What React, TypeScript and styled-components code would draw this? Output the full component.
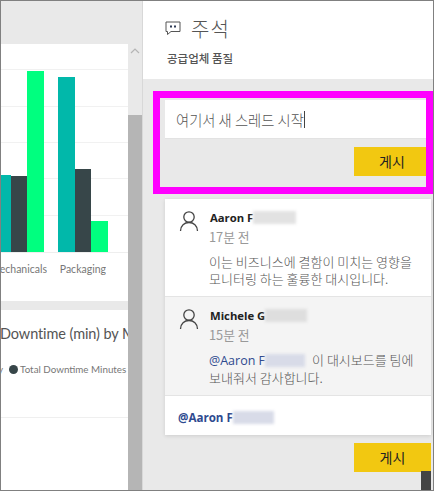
import React from "react";
import styled, { createGlobalStyle } from "styled-components";

const Global = createGlobalStyle`
  html, body { margin: 0; padding: 0; background: #fff; }
  * { box-sizing: border-box; }
  body { font-family: "Open Sans", "Noto Sans CJK KR", sans-serif; }
`;

const Frame = styled.div`
  width: 434px;
  height: 491px;
  border: 1px solid #808080;
  display: flex;
  overflow: hidden;
  background: #e9e9e9;
`;

const Dashboard = styled.div`
  width: 127px;
  flex: none;
  padding-top: 43px;
  display: flex;
  flex-direction: column;
  gap: 9px;
  overflow: hidden;
`;

const ChartCard = styled.div`
  height: 257px;
  background: #fff;
  display: flex;
  flex-direction: column;
`;

const AxisLabels = styled.div`
  display: flex;
  font: 400 10.5px Lato, sans-serif;
  color: #777;
  height: 20px;
  margin-top: 10px;
  white-space: nowrap;
`;

const AxisLabel = styled.span<{ $w: number; $ml: number }>`
  width: ${(p) => p.$w}px;
  margin-left: ${(p) => p.$ml}px;
  flex: none;
  display: flex;
  justify-content: flex-end;
  overflow: hidden;
`;

const DowntimeCard = styled.div`
  flex: 1;
  background: #fff;
  padding-top: 13px;
  white-space: nowrap;
`;

const CardTitle = styled.div`
  font: 400 14.5px/22px Lato, sans-serif;
  letter-spacing: -0.1px;
  color: #555;
  margin-left: -1px;
  overflow: hidden;
`;

const Legend = styled.div`
  display: flex;
  align-items: center;
  margin-top: 16px;
  height: 16px;
  font: 400 9.8px Lato, sans-serif;
  color: #777;
`;

const LegendClip = styled.span`
  margin-left: -3px;
`;

const LegendDot = styled.span`
  width: 9px;
  height: 9px;
  flex: none;
  border-radius: 50%;
  background: #374649;
  margin: 0 2px 0 6px;
`;

const CardRule = styled.div`
  height: 1px;
  background: #efefef;
  margin-top: 40px;
`;

const Scrollbar = styled.div`
  width: 14px;
  flex: none;
  background: #e9e9e9;
  display: flex;
  flex-direction: column;
`;

const ScrollTrack = styled.div`
  height: 114px;
  padding: 47px 0 0 2px;
`;

const ScrollThumb = styled.div`
  flex: 1;
  background: #b5b5b5;
`;

const Panel = styled.div`
  flex: 1;
  min-width: 0;
  border-left: 1px solid #d8d8d8;
  display: flex;
  flex-direction: column;
  background: #e9e9e9;
`;

const PanelHeader = styled.div`
  height: 78px;
  background: #fff;
  padding: 12px 0 0 22px;
  flex: none;
`;

const TitleRow = styled.div`
  display: flex;
  align-items: center;
  gap: 10px;
  height: 30px;
`;

const Title = styled.h1`
  margin: 0;
  font-size: 20px;
  font-weight: 300;
  color: #555;
  letter-spacing: 1px;
  font-family: "Noto Sans CJK KR", sans-serif;
`;

const Subtitle = styled.div`
  font-size: 11.5px;
  line-height: 16px;
  font-weight: 500;
  color: #555;
  margin: 7px 0 0 2px;
  font-family: "Noto Sans CJK KR", sans-serif;
`;

const Highlight = styled.section`
  margin: 12px 0 0 10px;
  height: 103px;
  border: 7px solid #ff00ff;
  padding: 2px 0 0 5px;
  flex: none;
`;

const NewThread = styled.div`
  height: 39px;
  background: #fff;
  border-bottom: 1px solid #e2e2e2;
  padding-left: 11px;
  display: flex;
  align-items: center;
  font-size: 14.3px;
  color: #555;
  font-weight: 300;
  font-family: "Noto Sans CJK KR", sans-serif;
`;

const Caret = styled.span`
  width: 1px;
  height: 17px;
  background: #444;
`;

const ButtonRow = styled.div`
  display: flex;
  justify-content: flex-end;
  margin-top: 8px;
`;

const PostButton = styled.button<{ $w: number; $pl?: number }>`
  width: ${(p) => p.$w}px;
  height: 29px;
  border: none;
  padding: 0 0 1px ${(p) => p.$pl ?? 0}px;
  background: #f2c811;
  color: #222;
  font-size: 14px;
  font-family: "Noto Sans CJK KR", sans-serif;
`;

const Thread = styled.div`
  margin: 5px 2px 0 22px;
  background: #fff;
  box-shadow: 0 1px 4px rgba(0, 0, 0, 0.12);
  flex: none;
`;

const Comment = styled.article<{ $alt?: boolean; $h: number }>`
  height: ${(p) => p.$h}px;
  background: ${(p) => (p.$alt ? "#f4f4f4" : "#fff")};
  border-bottom: 1px solid #e4e4e4;
  padding: 11px 0 0 14px;
  display: flex;
  gap: 8px;
`;

const Avatar = styled.svg`
  width: 22px;
  height: 22px;
  flex: none;
`;

const CommentBody = styled.div`
  min-width: 0;
  font-family: "Noto Sans CJK KR", "Open Sans", sans-serif;
`;

const Author = styled.div`
  display: flex;
  align-items: center;
  height: 15px;
  margin-left: 1px;
  font: 700 11.3px "Open Sans", sans-serif;
  color: #222;
`;

const Blur = styled.span<{ $w: number; $c: string }>`
  display: inline-block;
  width: ${(p) => p.$w}px;
  height: 13px;
  background: ${(p) => p.$c};
  filter: blur(1.5px);
  flex: none;
`;

const Time = styled.div`
  font-size: 12.8px;
  line-height: 15px;
  color: #999;
  margin-top: 4px;
`;

const Message = styled.p`
  margin: 9px 0 0;
  font-size: 13px;
  line-height: 17px;
  font-weight: 300;
  color: #555;
  white-space: nowrap;
`;

const Mention = styled.span`
  color: #2e4a8f;
  font: 400 12.5px "Open Sans", sans-serif;
`;

const MentionBlur = styled(Blur)`
  vertical-align: -2px;
  margin-right: 7px;
`;

const Reply = styled.div`
  height: 39px;
  padding: 4px 0 0 13px;
  display: flex;
  align-items: center;
  font: 700 11.6px "Open Sans", sans-serif;
  color: #2e4a8f;
`;

const Footer = styled.div`
  display: flex;
  justify-content: flex-end;
  align-items: flex-start;
  padding-right: 2px;
  margin-top: 8px;
  position: relative;
  flex: 1;
`;

const CornerBlock = styled.div`
  position: absolute;
  right: 2px;
  bottom: 0;
  width: 10px;
  height: 19px;
  background: #444;
`;

const bars = [
  { x: 0, y: 175, w: 10, c: "#01b8aa" },
  { x: 10, y: 176, w: 16, c: "#374649" },
  { x: 26, y: 71, w: 17, c: "#00ff7f" },
  { x: 57, y: 77, w: 17, c: "#01b8aa" },
  { x: 74, y: 169, w: 16, c: "#374649" },
  { x: 90, y: 221, w: 17, c: "#00ff7f" },
];

function BarChart() {
  return (
    <svg width="127" height="209" viewBox="0 44 127 209" style={{ display: "block", flex: "none" }}>
      {[69, 106, 142, 178, 215].map((y) => (
        <rect key={y} x="0" y={y} width="127" height="1" fill="#f1f1f1" />
      ))}
      {bars.map((b) => (
        <rect key={b.x} x={b.x} y={b.y} width={b.w} height={252 - b.y} fill={b.c} />
      ))}
      <rect x="0" y="252" width="127" height="1" fill="#eee" />
    </svg>
  );
}

function ChevronUp() {
  return (
    <svg width="10" height="6" viewBox="0 0 10 6" style={{ display: "block" }}>
      <path d="M1 5 L5 1 L9 5" fill="none" stroke="#b5b5b5" strokeWidth="1.2" />
    </svg>
  );
}

function CommentIcon() {
  return (
    <svg width="16" height="16" viewBox="0 0 16 16" style={{ flex: "none" }}>
      <path d="M1 2 H15 V11.5 H6 L2.5 14.5 V11.5 H1 Z" fill="none" stroke="#555" strokeWidth="1" />
      <rect x="5" y="5.5" width="2" height="2" fill="#2e3a55" />
      <rect x="9" y="5.5" width="2" height="2" fill="#2e3a55" />
    </svg>
  );
}

function UserIcon() {
  return (
    <Avatar viewBox="0 0 22 22">
      <circle cx="10" cy="7" r="5.2" fill="none" stroke="#444" strokeWidth="1.3" />
      <path d="M1.5 21 C1.5 15.5 5.5 12.5 10 12.5 C14.5 12.5 18.5 15.5 18.5 21" fill="none" stroke="#444" strokeWidth="1.3" />
    </Avatar>
  );
}

export default function App() {
  return (
    <>
      <Global />
      <Frame>
        <Dashboard>
          <ChartCard>
            <BarChart />
            <AxisLabels>
              <AxisLabel $w={46} $ml={0}>Mechanicals</AxisLabel>
              <AxisLabel $w={46} $ml={13}>Packaging</AxisLabel>
            </AxisLabels>
          </ChartCard>
          <DowntimeCard>
            <CardTitle>Downtime (min) by M</CardTitle>
            <Legend>
              <LegendClip>y</LegendClip>
              <LegendDot />
              <span>Total Downtime Minutes</span>
            </Legend>
            <CardRule />
          </DowntimeCard>
        </Dashboard>
        <Scrollbar>
          <ScrollTrack>
            <ChevronUp />
          </ScrollTrack>
          <ScrollThumb />
        </Scrollbar>
        <Panel>
          <PanelHeader>
            <TitleRow>
              <CommentIcon />
              <Title>주석</Title>
            </TitleRow>
            <Subtitle>공급업체 품질</Subtitle>
          </PanelHeader>
          <Highlight>
            <NewThread>
              여기서 새 스레드 시작
              <Caret />
            </NewThread>
            <ButtonRow>
              <PostButton $w={72} $pl={4}>게시</PostButton>
            </ButtonRow>
          </Highlight>
          <Thread>
            <Comment $h={98}>
              <UserIcon />
              <CommentBody>
                <Author>
                  Aaron F<Blur $w={43} $c="#e2e2e2" />
                </Author>
                <Time>17분 전</Time>
                <Message>
                  이는 비즈니스에 결함이 미치는 영향을
                  <br />
                  모니터링 하는 훌륭한 대시입니다.
                </Message>
              </CommentBody>
            </Comment>
            <Comment $h={99} $alt>
              <UserIcon />
              <CommentBody>
                <Author>
                  Michele G<Blur $w={42} $c="#dedede" />
                </Author>
                <Time>15분 전</Time>
                <Message>
                  <Mention>@Aaron F</Mention>
                  <MentionBlur $w={40} $c="#d8dbe8" />
                  이 대시보드를 팀에
                  <br />
                  보내줘서 감사합니다.
                </Message>
              </CommentBody>
            </Comment>
            <Reply>
              @Aaron F<Blur $w={41} $c="#d8dbe8" />
            </Reply>
          </Thread>
          <Footer>
            <PostButton $w={77}>게시</PostButton>
            <CornerBlock />
          </Footer>
        </Panel>
      </Frame>
    </>
  );
}
